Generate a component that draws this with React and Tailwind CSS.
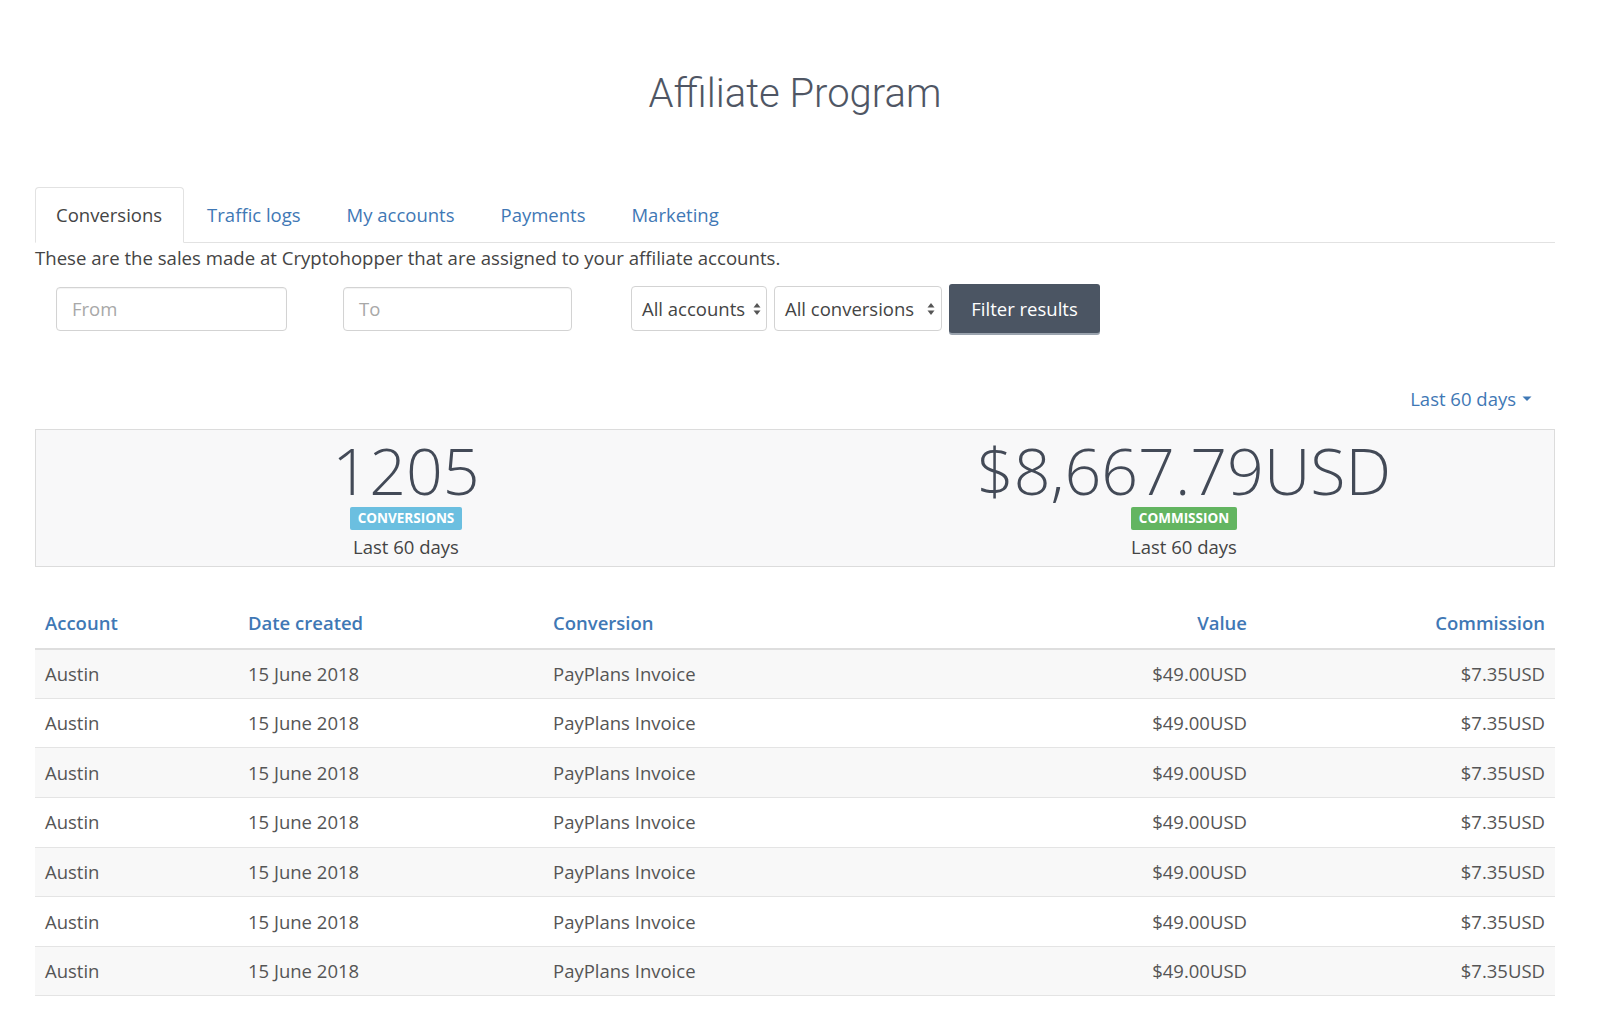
import React from "react";

const rows = Array.from({ length: 7 });

function Updown() {
  return (
    <svg width="8" height="14" viewBox="0 0 8 14" className="ml-[6px] inline-block">
      <path d="M4 1 L7.5 5.5 L0.5 5.5 Z" fill="#555" />
      <path d="M4 13 L7.5 8.5 L0.5 8.5 Z" fill="#555" />
    </svg>
  );
}

function Stat({ value, label, color }) {
  return (
    <div className="flex flex-col items-center pt-[8px]">
      <div className="h-[64px] text-[64.5px] font-light leading-[64px] text-[#434a57]">{value}</div>
      <div className={`mt-[5px] rounded-[2px] px-[8px] text-[13.5px] font-bold leading-[23px] text-white ${color}`}>
        {label}
      </div>
      <div className="mt-[4px] text-[18.5px] leading-[26px] text-[#444]">Last 60 days</div>
    </div>
  );
}

export default function App() {
  return (
    <div className="min-h-[1010px] w-[1600px] bg-white text-[#444]" style={{ fontFamily: '"Open Sans", sans-serif' }}>
      <div className="ml-[35px] w-[1520px]">
        <h1
          className="pt-[64px] text-center text-[40px] font-light leading-[60px] text-[#4f5664]"
          style={{ fontFamily: "Roboto, sans-serif" }}
        >
          Affiliate Program
        </h1>

        {/* Tabs */}
        <div className="mt-[63px] flex h-[56px] items-stretch border-b border-[#e2e2e2] text-[18.5px]">
          <div className="relative -mb-px flex items-center rounded-t-[4px] border border-[#e2e2e2] border-b-white bg-white pl-[20px] pr-[21px] text-[#444]">
            Conversions
          </div>
          <div className="flex items-center px-[23px] text-[#3f78b5]">Traffic logs</div>
          <div className="flex items-center px-[23px] text-[#3f78b5]">My accounts</div>
          <div className="flex items-center px-[23px] text-[#3f78b5]">Payments</div>
          <div className="flex items-center px-[23px] text-[#3f78b5]">Marketing</div>
        </div>

        <p className="mt-[3px] text-[18.6px] leading-[24px] text-[#444]">
          These are the sales made at Cryptohopper that are assigned to your affiliate accounts.
        </p>

        {/* Filters */}
        <div className="mt-[14px] flex items-center">
          <div className="ml-[21px] flex h-[44px] w-[231px] items-center rounded-[4px] border border-[#d3d3d3] px-[15px] text-[18.5px] text-[#a8a8a8] shadow-[inset_0_1px_1px_rgba(0,0,0,0.05)]">
            From
          </div>
          <div className="ml-[56px] flex h-[44px] w-[229px] items-center rounded-[4px] border border-[#d3d3d3] px-[15px] text-[18.5px] text-[#a8a8a8] shadow-[inset_0_1px_1px_rgba(0,0,0,0.05)]">
            To
          </div>
          <div className="ml-[59px] flex h-[45px] w-[136px] items-center justify-between rounded-[4px] border border-[#d3d3d3] pl-[10px] pr-[5px] text-[18.5px] text-[#444]">
            All accounts
            <Updown />
          </div>
          <div className="ml-[7px] flex h-[45px] w-[168px] items-center justify-between rounded-[4px] border border-[#d3d3d3] pl-[10px] pr-[6px] text-[18.5px] text-[#444]">
            All conversions
            <Updown />
          </div>
          <div className="ml-[7px] flex h-[49px] w-[151px] items-center justify-center rounded-[3px] bg-[#4b5563] text-[18.5px] text-white shadow-[0_2px_0_#9aa3ae]">
            Filter results
          </div>
        </div>

        <div className="mt-[52px] flex justify-end pr-[23px]">
          <div className="flex items-center text-[18.5px] text-[#3f78b5]">
            Last 60 days
            <svg width="10" height="6" viewBox="0 0 10 6" className="ml-[6px]">
              <path d="M0.5 0.5 L9.5 0.5 L5 5 Z" fill="#3f78b5" />
            </svg>
          </div>
        </div>

        {/* Stats */}
        <div className="mt-[16px] grid h-[138px] grid-cols-2 gap-[38px] border border-[#dcdcdc] bg-[#f8f8f9]">
          <Stat value="1205" label="CONVERSIONS" color="bg-[#6bbfe0]" />
          <Stat value="$8,667.79USD" label="COMMISSION" color="bg-[#63b561]" />
        </div>

        {/* Table */}
        <table className="mt-[31px] w-full table-fixed border-collapse text-[18.5px]">
          <colgroup>
            <col className="w-[203px]" />
            <col className="w-[305px]" />
            <col className="w-[460px]" />
            <col className="w-[254px]" />
            <col className="w-[298px]" />
          </colgroup>
          <thead>
            <tr className="h-[51px] border-b-2 border-[#dedede] text-[#3f78b5]">
              <th className="px-[10px] text-left font-semibold">Account</th>
              <th className="px-[10px] text-left font-semibold">Date created</th>
              <th className="px-[10px] text-left font-semibold">Conversion</th>
              <th className="px-[10px] text-right font-semibold">Value</th>
              <th className="px-[10px] text-right font-semibold">Commission</th>
            </tr>
          </thead>
          <tbody>
            {rows.map((_, i) => (
              <tr
                key={i}
                className={`h-[49.6px] border-b border-[#e4e4e4] ${i % 2 === 0 ? "bg-[#f8f8f8]" : "bg-white"}`}
              >
                <td className="px-[10px] text-[#555]">Austin</td>
                <td className="px-[10px] text-[#555]">15 June 2018</td>
                <td className="px-[10px] text-[#555]">PayPlans Invoice</td>
                <td className="px-[10px] text-right text-[#555]">$49.00USD</td>
                <td className="px-[10px] text-right text-[#555]">$7.35USD</td>
              </tr>
            ))}
          </tbody>
        </table>
      </div>
    </div>
  );
}
